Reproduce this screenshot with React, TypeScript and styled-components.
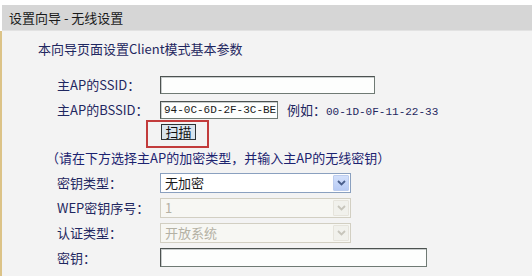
import React from 'react';
import styled, { createGlobalStyle } from 'styled-components';

const GlobalStyle = createGlobalStyle`
  body {
    margin: 0;
    background: #ffffff;
    font-family: "Noto Sans CJK SC", "DejaVu Sans", sans-serif;
  }
`;

const Page = styled.div`
  width: 532px;
  height: 276px;
  padding-top: 5px;
  box-sizing: border-box;
  background: #ffffff;
  display: flex;
  flex-direction: column;
  overflow: hidden;
`;

const Header = styled.div`
  margin-left: 2px;
  height: 25px;
  line-height: 25px;
  padding-left: 7px;
  background: #d6d6d6;
  border-bottom: 1px solid #e2e2e2;
  color: #1a1a1a;
  font-size: 13px;
`;

const Body = styled.div`
  flex: 1;
  background: #f3f3f3;
  border-left: 2px solid #dcc387;
  padding-top: 5px;
`;

const Subtitle = styled.div`
  padding-left: 36px;
  height: 25px;
  line-height: 25px;
  margin-bottom: 11px;
  color: #1f2760;
  font-size: 13px;
`;

const Form = styled.div`
  display: grid;
  grid-template-columns: 103px 1fr;
  padding-left: 55px;
  color: #1f2760;
  font-size: 13px;
`;

const Label = styled.div`
  height: 25px;
  display: flex;
  align-items: center;
  white-space: nowrap;
`;

const Field = styled.div<{ $h?: number; $top?: boolean }>`
  height: ${(p) => p.$h ?? 25}px;
  display: flex;
  align-items: ${(p) => (p.$top ? 'flex-start' : 'center')};
  gap: 9px;
  white-space: nowrap;
`;

const TextInput = styled.div<{ $w: number; $h?: number }>`
  width: ${(p) => p.$w}px;
  height: ${(p) => p.$h ?? 18}px;
  box-sizing: border-box;
  background: #fdfefd;
  border: 1px solid #4c5250;
  border-bottom-color: #6f7a74;
  border-right-color: #6f7a74;
  box-shadow: inset 1px 1px 0 #c8cccc;
  padding-left: 3px;
  display: flex;
  align-items: center;
  overflow: hidden;
  white-space: nowrap;
  font-family: "Liberation Mono", monospace;
  font-size: 11px;
  color: #1a1a1a;
`;

const Mono = styled.span`
  font-family: "Liberation Mono", monospace;
  font-size: 11px;
`;

const ScanWrap = styled.div`
  position: relative;
  margin-top: 2px;
  margin-left: 1px;
`;

const ScanButton = styled.div`
  width: 35px;
  height: 16px;
  box-sizing: border-box;
  border: 1px solid #2e3436;
  background: #d9e5ee;
  color: #111;
  font-size: 13px;
  line-height: 14px;
  text-align: center;
`;

const Highlight = styled.div`
  position: absolute;
  left: -15px;
  top: -4px;
  width: 63px;
  height: 28px;
  box-sizing: border-box;
  border: 2px solid #c23b3b;
  pointer-events: none;
`;

const Note = styled.div`
  padding-left: 44px;
  height: 25px;
  display: flex;
  align-items: center;
  white-space: nowrap;
  color: #1c2370;
  font-size: 13px;
`;

const Select = styled.div<{ $disabled?: boolean }>`
  width: 191px;
  height: 20px;
  box-sizing: border-box;
  border: 1px solid ${(p) => (p.$disabled ? '#d2cfc2' : '#8aa0bf')};
  background: ${(p) => (p.$disabled ? '#f7f7f3' : '#ffffff')};
  color: ${(p) => (p.$disabled ? '#b4b1a4' : '#1a1a1a')};
  display: flex;
  align-items: center;
  justify-content: space-between;
  padding-left: 4px;
  padding-right: 1px;
  font-size: 13px;
`;

const Arrow = styled.div<{ $disabled?: boolean }>`
  width: 16px;
  height: 16px;
  box-sizing: border-box;
  border-radius: 1px;
  background: ${(p) => (p.$disabled ? '#f1f1ec' : 'linear-gradient(#d3e0fb, #b8cbf5)')};
  border: 1px solid ${(p) => (p.$disabled ? '#e6e4dc' : '#bcccee')};
  display: flex;
  align-items: center;
  justify-content: center;
`;

const Chevron: React.FC<{ color: string }> = ({ color }) => (
  <svg width="9" height="6" viewBox="0 0 9 6">
    <path d="M1 1 L4.5 4.5 L8 1" fill="none" stroke={color} strokeWidth="1.8" />
  </svg>
);

const Dropdown: React.FC<{ value: string; disabled?: boolean }> = ({ value, disabled }) => (
  <Select $disabled={disabled}>
    <span>{value}</span>
    <Arrow $disabled={disabled}>
      <Chevron color={disabled ? '#c7c5bb' : '#4a5f8c'} />
    </Arrow>
  </Select>
);

const App: React.FC = () => {
  return (
    <>
      <GlobalStyle />
      <Page>
        <Header>设置向导 - 无线设置</Header>
        <Body>
          <Subtitle>本向导页面设置Client模式基本参数</Subtitle>
          <Form>
            <Label>主AP的SSID：</Label>
            <Field>
              <TextInput $w={215} />
            </Field>

            <Label>主AP的BSSID：</Label>
            <Field>
              <TextInput $w={118}>94-0C-6D-2F-3C-BE</TextInput>
              <span>
                例如：<Mono>00-1D-0F-11-22-33</Mono>
              </span>
            </Field>

            <div />
            <Field $h={23} $top>
              <ScanWrap>
                <ScanButton>扫描</ScanButton>
                <Highlight />
              </ScanWrap>
            </Field>
          </Form>

          <Note>（请在下方选择主AP的加密类型，并输入主AP的无线密钥）</Note>

          <Form>
            <Label>密钥类型：</Label>
            <Field>
              <Dropdown value="无加密" />
            </Field>

            <Label>WEP密钥序号：</Label>
            <Field>
              <Dropdown value="1" disabled />
            </Field>

            <Label>认证类型：</Label>
            <Field>
              <Dropdown value="开放系统" disabled />
            </Field>

            <Label>密钥：</Label>
            <Field>
              <TextInput $w={267} $h={19} />
            </Field>
          </Form>
        </Body>
      </Page>
    </>
  );
};

export default App;
